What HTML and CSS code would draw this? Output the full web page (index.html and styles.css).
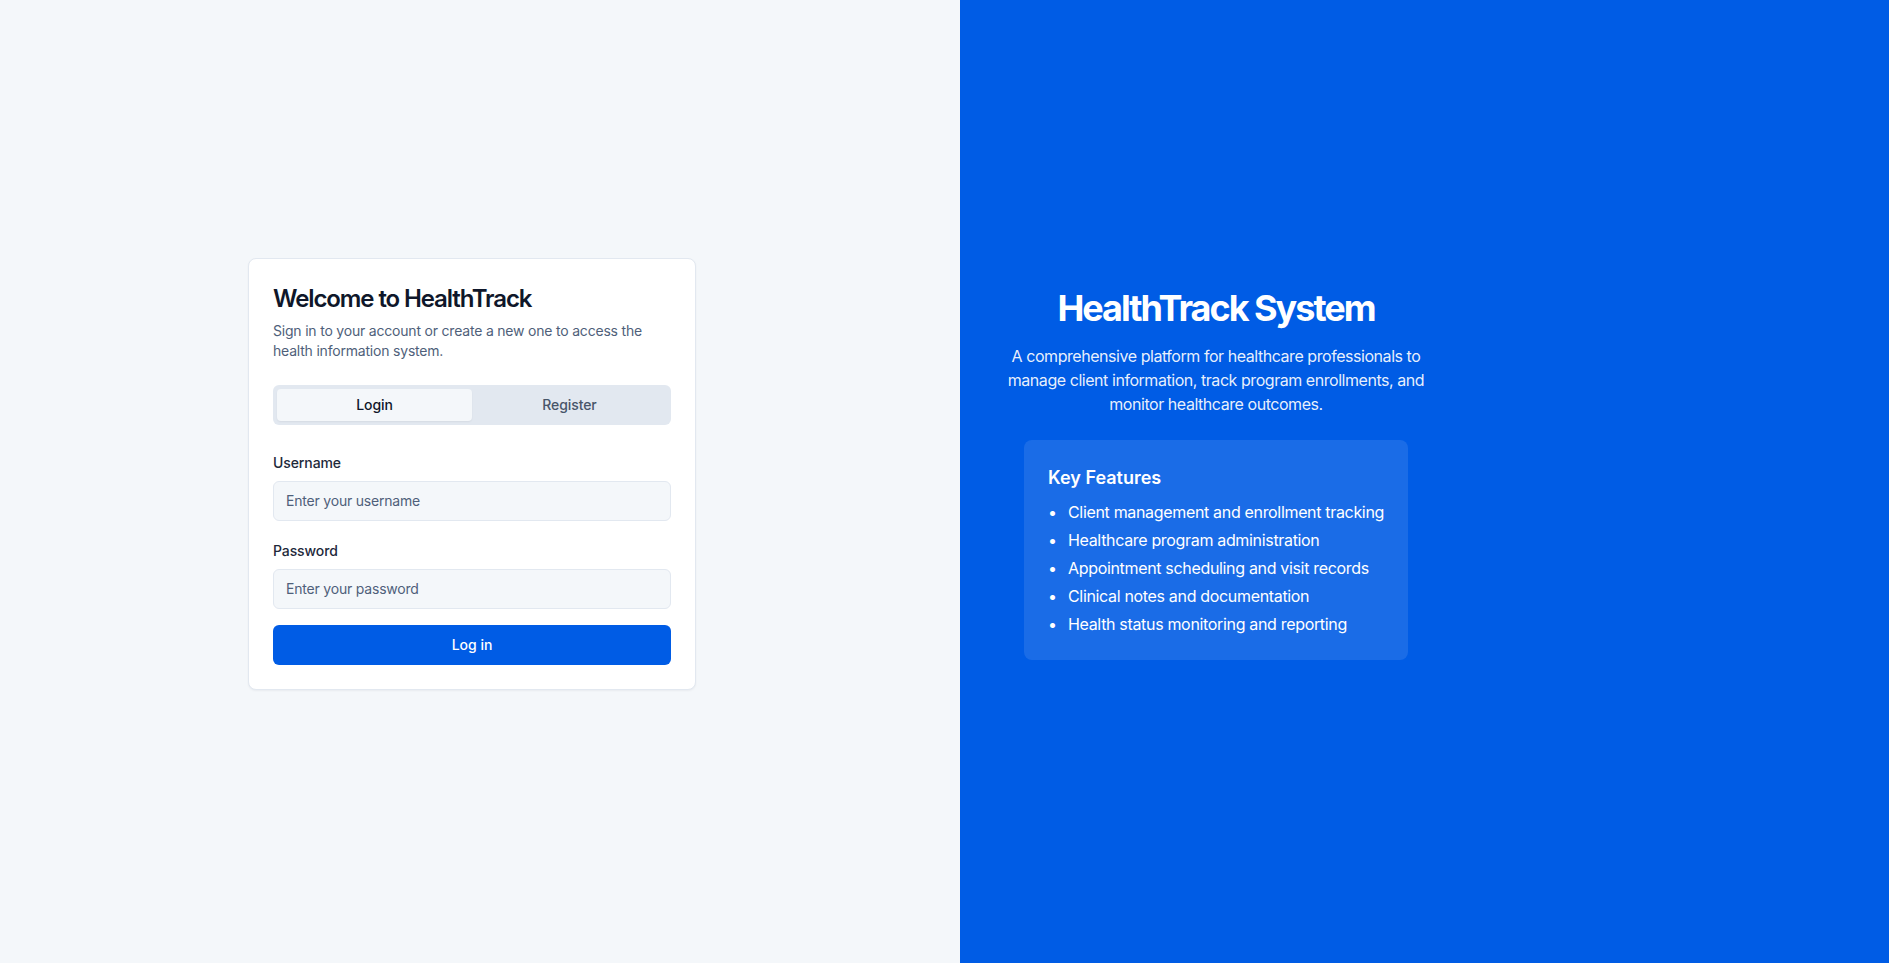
FILE: index.html
```html
<!DOCTYPE html>
<html lang="en">
<head>
<meta charset="utf-8">
<title>HealthTrack</title>
<link rel="stylesheet" href="styles.css">
</head>
<body>
<div class="page">
  <section class="left">
    <div class="card">
      <h1 class="card-title">Welcome to HealthTrack</h1>
      <p class="card-desc">Sign in to your account or create a new one to access the health information system.</p>
      <div class="tabs">
        <button class="tab active" type="button">Login</button>
        <button class="tab" type="button">Register</button>
      </div>
      <form class="form">
        <div class="field">
          <label class="label" for="u">Username</label>
          <input class="input" id="u" type="text" placeholder="Enter your username">
        </div>
        <div class="field">
          <label class="label" for="p">Password</label>
          <input class="input" id="p" type="password" placeholder="Enter your password">
        </div>
        <button class="submit" type="button">Log in</button>
      </form>
    </div>
  </section>
  <section class="right">
    <div class="hero">
      <h2 class="hero-title">HealthTrack System</h2>
      <p class="hero-text">A comprehensive platform for healthcare professionals to manage client information, track program enrollments, and monitor healthcare outcomes.</p>
      <div class="features">
        <h3 class="features-title">Key Features</h3>
        <ul class="features-list">
          <li>Client management and enrollment tracking</li>
          <li>Healthcare program administration</li>
          <li>Appointment scheduling and visit records</li>
          <li>Clinical notes and documentation</li>
          <li>Health status monitoring and reporting</li>
        </ul>
      </div>
    </div>
  </section>
</div>
</body>
</html>
```
FILE: styles.css
```css
* { box-sizing: border-box; }
html, body { margin: 0; padding: 0; }
body {
  font-family: Inter, "Noto Sans", "Liberation Sans", sans-serif;
  color: #0f172a;
  -webkit-font-smoothing: antialiased;
}
.page {
  display: flex;
  height: 963px;
}
.left {
  width: 960px;
  flex-shrink: 0;
  background: #f4f7fa;
  display: flex;
  align-items: center;
  justify-content: center;
  padding: 0 16px 16px 0;
}
.card {
  width: 448px;
  background: #ffffff;
  border: 1px solid #e2e8f0;
  border-radius: 8px;
  box-shadow: 0 1px 2px rgba(15, 23, 42, 0.05);
  padding: 24px;
  display: flex;
  flex-direction: column;
}
.card-title {
  margin: 0;
  font-size: 24px;
  line-height: 32px;
  font-weight: 600;
  letter-spacing: -1.1px;
  color: #0f172a;
}
.card-desc {
  margin: 6px 0 0;
  font-size: 14px;
  line-height: 20px;
  letter-spacing: -0.2px;
  color: #4f5f7a;
}
.tabs {
  margin-top: 24px;
  height: 40px;
  padding: 4px;
  border-radius: 6px;
  background: #e2e8f0;
  display: grid;
  grid-template-columns: 1fr 1fr;
}
.tab {
  border: 0;
  background: transparent;
  border-radius: 4px;
  font-family: inherit;
  font-size: 14px;
  font-weight: 500;
  letter-spacing: -0.1px;
  color: #475569;
  cursor: pointer;
}
.tab.active {
  background: #f4f7fa;
  color: #0f172a;
  box-shadow: 0 1px 2px rgba(15, 23, 42, 0.06);
}
.form {
  margin: 28px 0 0;
  display: flex;
  flex-direction: column;
  gap: 20px;
}
.field {
  display: flex;
  flex-direction: column;
  gap: 8px;
}
.field + .submit { margin-top: -4px; }
.label {
  font-size: 14px;
  line-height: 20px;
  font-weight: 500;
  letter-spacing: -0.1px;
  color: #1e293b;
}
.input {
  height: 40px;
  border: 1px solid #e2e8f0;
  border-radius: 6px;
  background: #f4f7fa;
  padding: 0 12px;
  font-family: inherit;
  font-size: 14px;
  letter-spacing: -0.2px;
  color: #0f172a;
  outline: none;
}
.input::placeholder { color: #4f5f7a; }
.submit {
  height: 40px;
  border: 0;
  border-radius: 6px;
  background: #005ce5;
  color: #ffffff;
  font-family: inherit;
  font-size: 14px;
  font-weight: 500;
  cursor: pointer;
}
.right {
  flex: 1;
  background: #005ce5;
  color: #ffffff;
  display: flex;
  align-items: center;
  padding: 0 32px 16px;
}
.hero {
  width: 448px;
  display: flex;
  flex-direction: column;
  align-items: center;
  text-align: center;
}
.hero-title {
  margin: 0;
  font-size: 36px;
  line-height: 40px;
  font-weight: 700;
  letter-spacing: -2px;
}
.hero-text {
  margin: 16px 0 0;
  font-size: 16px;
  line-height: 24px;
  letter-spacing: -0.45px;
  color: rgba(255, 255, 255, 0.92);
}
.features {
  margin-top: 24px;
  background: rgba(255, 255, 255, 0.1);
  border-radius: 8px;
  padding: 24px;
  text-align: left;
}
.features-title {
  margin: 0;
  font-size: 18px;
  line-height: 28px;
  font-weight: 600;
}
.features-list {
  list-style: none;
  margin: 8px 0 0;
  padding: 0;
  display: flex;
  flex-direction: column;
  gap: 4px;
}
.features-list li {
  display: flex;
  font-size: 16px;
  line-height: 24px;
  letter-spacing: -0.33px;
}
.features-list li::before {
  content: "\2022";
  width: 20px;
  flex-shrink: 0;
  letter-spacing: 0;
}
```
